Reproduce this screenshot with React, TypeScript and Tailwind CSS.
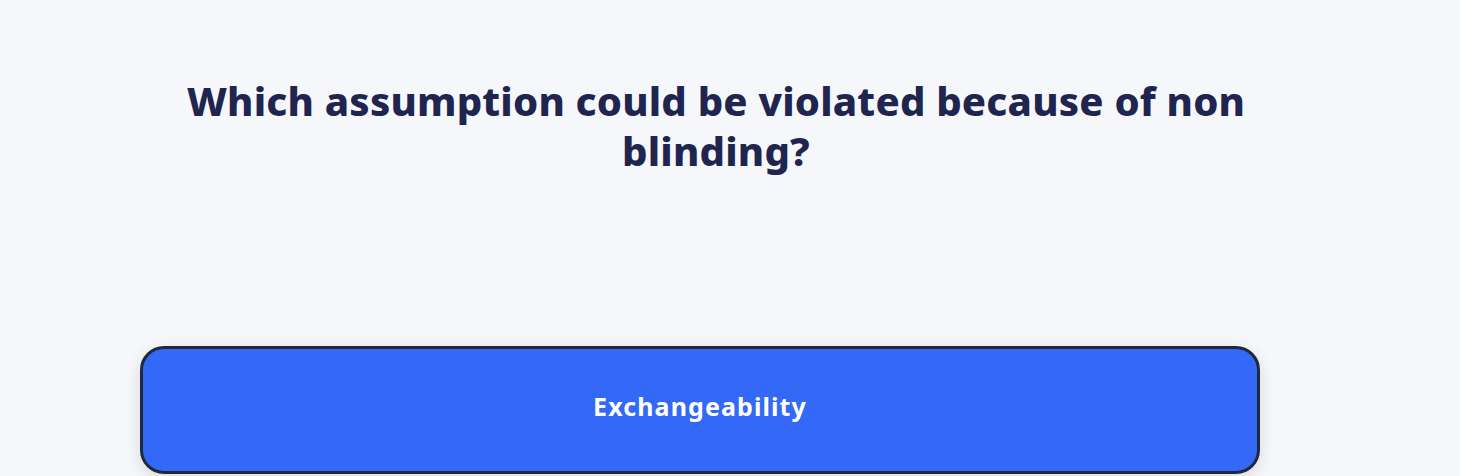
export default function App() {
  return (
    <div className="w-[1460px] h-[476px] bg-[#f6f7fb] overflow-hidden" style={{ fontFamily: '"Noto Sans", sans-serif' }}>
      <div className="w-[1152px] ml-[140px] pt-[76px]">
        <h1 className="text-center text-[40px] leading-[50px] font-extrabold text-[#20254f] tracking-[0.2px]">
          Which assumption could be violated because of non
          <br />
          blinding?
        </h1>
      </div>
      <div className="ml-[140px] mt-[170px] w-[1120px] h-[128px] rounded-[24px] border-[3px] border-[#1e2a3b] bg-[#3369f6] shadow-[0_4px_16px_rgba(0,0,0,0.12)] flex items-center justify-center">
        <span className="text-white text-[25px] font-bold tracking-[1.1px] -mt-[6px]">Exchangeability</span>
      </div>
    </div>
  );
}
